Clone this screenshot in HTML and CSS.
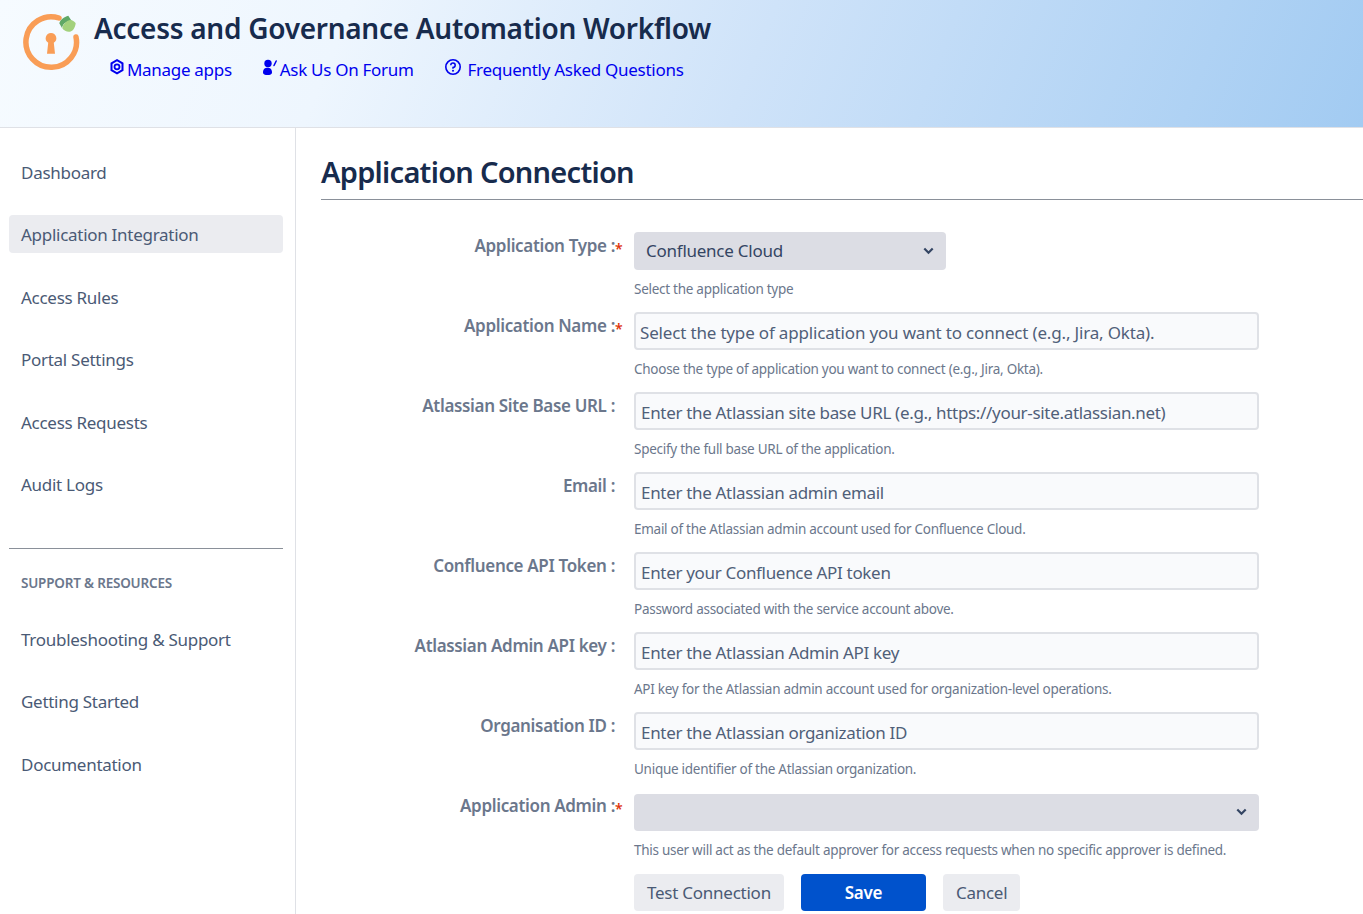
FILE: index.html
```html
<!DOCTYPE html>
<html lang="en">
<head>
<meta charset="utf-8">
<title>Application Connection</title>
<link rel="stylesheet" href="styles.css">
</head>
<body>
<header class="top">
  <svg class="logo" width="60" height="60" viewBox="0 0 60 60">
    <path d="M38 6A25.300 25.300 0 1 0 55 25" fill="none" stroke="#f99d56" stroke-width="5.500" stroke-linecap="round"/>
    <path d="M30 21a5.300 5.300 0 0 1 2.800 9.800l1.200 10.900h-8l1.200-10.900A5.300 5.300 0 0 1 30 21z" fill="#f99d56"/>
    <path d="M38.300 11.300C39 8 43 5 47.300 3.700L50.700 9C46 9 42 11 41 16z" fill="#5fa866"/>
    <path d="M41.300 16.300C42 12 45 9 49 8c2.500 0 4.500 1.500 5.700 3.300C54 16 52 19 49 19.700c-3 .5-6-1-7.700-3.400z" fill="#a3d17c"/>
  </svg>
  <div class="top-text">
    <h1>Access and Governance Automation Workflow</h1>
    <nav class="top-links">
      <a href="#"><svg width="16" height="18" viewBox="0 0 16 18"><path d="M8 2.200l5.500 3.200v6.800L8 15.400l-5.500-3.200V5.400z" fill="none" stroke="currentColor" stroke-width="2"/><circle cx="8" cy="8.800" r="2.500" fill="none" stroke="currentColor" stroke-width="1.800"/></svg>Manage apps</a>
      <a href="#" class="forum"><svg width="18" height="18" viewBox="0 0 18 18"><circle cx="6" cy="5.500" r="3.700" fill="currentColor"/><path d="M1 14.500C1 11 3 9.800 5.500 9.800S10 11 10 14.500C10 16.500 8 17 5.500 17S1 16.500 1 14.500z" fill="currentColor"/><path d="M12 7.500c.8-1.500 1.500-3 2.200-4.500" fill="none" stroke="currentColor" stroke-width="1.500" stroke-linecap="round"/></svg>Ask Us On Forum</a>
      <a href="#" class="faq"><svg width="18" height="18" viewBox="0 0 18 18"><circle cx="9" cy="9" r="7.200" fill="none" stroke="currentColor" stroke-width="1.600"/><path d="M6.800 7.200A2.200 2.200 0 1 1 9 9.500v1.300" fill="none" stroke="currentColor" stroke-width="1.500"/><circle cx="9" cy="12.800" r="1" fill="currentColor"/></svg>Frequently Asked Questions</a>
    </nav>
  </div>
</header>
<div class="body">
  <aside class="side">
    <a class="item" href="#">Dashboard</a>
    <a class="item active" href="#">Application Integration</a>
    <a class="item" href="#">Access Rules</a>
    <a class="item" href="#">Portal Settings</a>
    <a class="item" href="#">Access Requests</a>
    <a class="item" href="#">Audit Logs</a>
    <hr class="side-rule">
    <div class="side-head">SUPPORT &amp; RESOURCES</div>
    <a class="item" href="#">Troubleshooting &amp; Support</a>
    <a class="item" href="#">Getting Started</a>
    <a class="item" href="#">Documentation</a>
  </aside>
  <main class="main">
    <h2>Application Connection</h2>
    <form class="form">
      <div class="row"><label>Application Type :<b>*</b></label>
        <div class="ctl"><div class="select short">Confluence Cloud<svg width="11" height="8" viewBox="0 0 11 8"><path d="M1.300 1.500l4.200 4.200 4.200-4.200" fill="none" stroke="#344563" stroke-width="2.200"/></svg></div><p>Select the application type</p></div></div>
      <div class="row"><label>Application Name :<b>*</b></label>
        <div class="ctl"><div class="input tight">Select the type of application you want to connect (e.g., Jira, Okta).</div><p>Choose the type of application you want to connect (e.g., Jira, Okta).</p></div></div>
      <div class="row"><label>Atlassian Site Base URL :</label>
        <div class="ctl"><div class="input">Enter the Atlassian site base URL (e.g., https://your-site.atlassian.net)</div><p>Specify the full base URL of the application.</p></div></div>
      <div class="row"><label>Email :</label>
        <div class="ctl"><div class="input">Enter the Atlassian admin email</div><p>Email of the Atlassian admin account used for Confluence Cloud.</p></div></div>
      <div class="row"><label>Confluence API Token :</label>
        <div class="ctl"><div class="input">Enter your Confluence API token</div><p>Password associated with the service account above.</p></div></div>
      <div class="row"><label>Atlassian Admin API key :</label>
        <div class="ctl"><div class="input">Enter the Atlassian Admin API key</div><p>API key for the Atlassian admin account used for organization-level operations.</p></div></div>
      <div class="row"><label>Organisation ID :</label>
        <div class="ctl"><div class="input">Enter the Atlassian organization ID</div><p>Unique identifier of the Atlassian organization.</p></div></div>
      <div class="row last"><label>Application Admin :<b>*</b></label>
        <div class="ctl"><div class="select"><span></span><svg width="11" height="8" viewBox="0 0 11 8"><path d="M1.300 1.500l4.200 4.200 4.200-4.200" fill="none" stroke="#344563" stroke-width="2.200"/></svg></div><p>This user will act as the default approver for access requests when no specific approver is defined.</p></div></div>
      <div class="actions">
        <button type="button" class="btn">Test Connection</button>
        <button type="button" class="btn primary">Save</button>
        <button type="button" class="btn">Cancel</button>
      </div>
    </form>
  </main>
</div>
</body>
</html>
```
FILE: styles.css
```css
* { box-sizing: border-box; }
html, body { margin: 0; height: 914px; overflow: hidden; }
body { font-family: "Noto Sans", "Open Sans", sans-serif; color: #172b4d; background: #fff; display: flex; flex-direction: column; }
.top { height: 128px; flex: none; display: flex; align-items: flex-start; padding: 12px 0 0 21px; border-bottom: 1px solid #dfe1e6;
  background: linear-gradient(112deg, #f6fbff 0%, #eef6fe 25%, #cfe3f9 55%, #a2cbf2 100%); }
.logo { flex: none; }
.top-text { margin-left: 13px; }
h1 { margin: -1px 0 0; font-size: 28px; line-height: 34px; font-weight: 600; color: #172b4d; letter-spacing: -.28px; white-space: nowrap; }
.top-links { display: flex; gap: 30px; margin: 12px 0 0 15px; }
.top-links a { display: flex; align-items: center; gap: 2px; color: #0000ee; text-decoration: none; font-size: 17px; line-height: 26px; letter-spacing: -.3px; white-space: nowrap; }
.top-links svg { margin-top: -6px; }
.top-links .forum { gap: 0; }
.top-links .faq { gap: 6px; letter-spacing: -.28px; }
.body { flex: 1; display: flex; min-height: 0; }
.side { width: 296px; flex: none; border-right: 1px solid #dfe1e6; padding: 25px 12px 0 9px; }
.item { display: block; height: 38px; line-height: 39px; padding-left: 12px; margin-bottom: 24.4px; border-radius: 4px; font-size: 17px; letter-spacing: -.28px; color: #4a5a75; text-decoration: none; white-space: nowrap; }
.item.active { background: #ebecf0; }
.side-rule { border: 0; border-top: 1px solid #8a9099; margin: 45px 0 25px; }
.side-head { font-size: 13.500px; font-weight: 600; line-height: 18px; padding-left: 12px; color: #6b778c; letter-spacing: -.2px; margin-bottom: 28px; }
.main { flex: 1; min-width: 0; padding: 24px 0 0 25px; }
h2 { margin: 0; height: 48px; font-size: 29px; line-height: 40px; font-weight: 600; letter-spacing: -.73px; color: #172b4d; border-bottom: 1px solid #8a9099; }
.form { margin-top: 32px; }
.row { display: flex; height: 80px; }
.row label { width: 294px; flex: none; text-align: right; position: relative; font-size: 17px; font-weight: 600; line-height: 28px; color: #6b778c; letter-spacing: -.34px; white-space: nowrap; }
.row label b { position: absolute; left: 100%; top: 3px; color: #de350b; font-size: 14px; font-weight: 600; letter-spacing: 0; }
.ctl { margin-left: 19px; width: 625px; }
.ctl p { margin: 10px 0 0; font-size: 13.500px; line-height: 18px; color: #6b778c; letter-spacing: -.27px; white-space: nowrap; }
.select { height: 38px; display: flex; justify-content: space-between; align-items: center; background: #dcdde4; border-radius: 4px; padding: 0 12px 1px; font-size: 17px; color: #344563; letter-spacing: -.25px; }
.select.short { width: 312px; }
.input { height: 38px; line-height: 37px; border: 2px solid #dfe1e6; border-radius: 4px; background: #f9fafc; padding-left: 5px; font-size: 17px; color: #505f79; letter-spacing: -.32px; white-space: nowrap; overflow: hidden; }
.input.tight { padding-left: 4px; letter-spacing: -.17px; }
.row.last .ctl { padding-top: 2px; }
.row.last .select { height: 37px; }
.actions { display: flex; gap: 17px; margin: 2px 0 0 313px; }
.btn { height: 37px; border: 0; border-radius: 4px; background: #ebecf0; font: inherit; font-size: 17px; letter-spacing: -.25px; color: #4a5a75; padding: 0 13px; }
.btn.primary { width: 125px; background: #0052cc; color: #fff; font-weight: 600; }
```
